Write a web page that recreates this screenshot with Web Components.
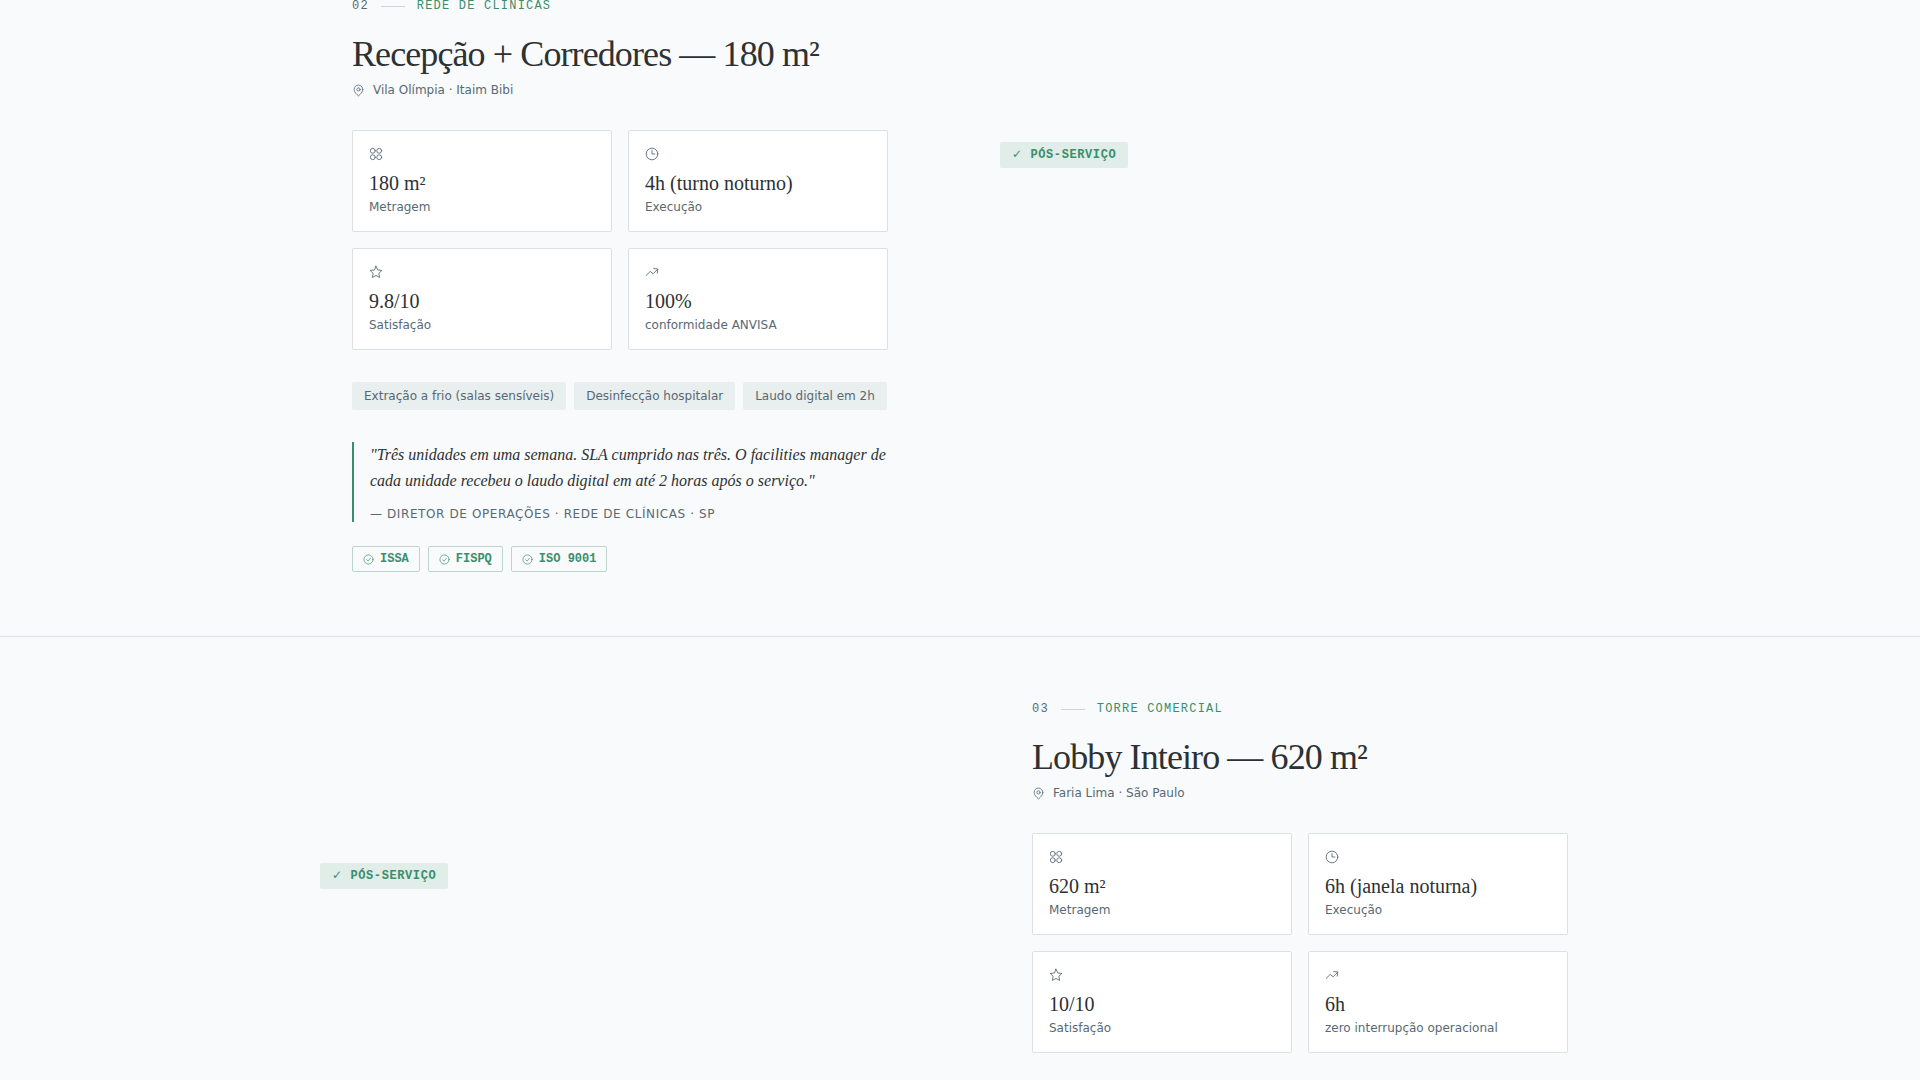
<!DOCTYPE html>
<html lang="pt-BR">
<head>
<meta charset="UTF-8">
<meta name="viewport" content="width=device-width, initial-scale=1">
<title>Cases</title>
<style>
    :root {
        --bg: #f8fafb;
        --ink: #2d3134;
        --muted: #586974;
        --green: #3a8e6c;
        --line: #dee1e3;
        --sans: "DejaVu Sans", sans-serif;
        --serif: "Liberation Serif", serif;
        --mono: "Liberation Mono", monospace;
    }

    body {
        margin: 0;
        background: var(--bg);
        color: var(--ink);
        font: 12px/16px var(--sans);
    }

    main {
        margin-top: -66px;
    }
</style>
</head>
<body>
<main>
    <case-study number="02" category="REDE DE CLÍNICAS" place="Vila Olímpia · Itaim Bibi">
        <span slot="title">Recepção + Corredores — 180 m²</span>
        <stat-card slot="stats" icon="grid" value="180 m²" label="Metragem"></stat-card>
        <stat-card slot="stats" icon="clock" value="4h (turno noturno)" label="Execução"></stat-card>
        <stat-card slot="stats" icon="star" value="9.8/10" label="Satisfação"></stat-card>
        <stat-card slot="stats" icon="trend" value="100%" label="conformidade ANVISA"></stat-card>
        <tag-list>
            <service-tag>Extração a frio (salas sensíveis)</service-tag>
            <service-tag>Desinfecção hospitalar</service-tag>
            <service-tag>Laudo digital em 2h</service-tag>
        </tag-list>
        <client-quote author="— DIRETOR DE OPERAÇÕES · REDE DE CLÍNICAS · SP">"Três unidades em uma semana. SLA cumprido nas três. O facilities manager de cada unidade recebeu o laudo digital em até 2 horas após o serviço."</client-quote>
        <tag-list>
            <cert-badge>ISSA</cert-badge>
            <cert-badge>FISPQ</cert-badge>
            <cert-badge>ISO 9001</cert-badge>
        </tag-list>
    </case-study>

    <case-study reverse number="03" category="TORRE COMERCIAL" place="Faria Lima · São Paulo">
        <span slot="title">Lobby Inteiro — 620 m²</span>
        <stat-card slot="stats" icon="grid" value="620 m²" label="Metragem"></stat-card>
        <stat-card slot="stats" icon="clock" value="6h (janela noturna)" label="Execução"></stat-card>
        <stat-card slot="stats" icon="star" value="10/10" label="Satisfação"></stat-card>
        <stat-card slot="stats" icon="trend" value="6h" label="zero interrupção operacional"></stat-card>
    </case-study>
</main>

<script>
const ICONS = {
    grid: '<circle cx="6.500" cy="6.500" r="4.200"/><circle cx="17.500" cy="6.500" r="4.200"/><circle cx="6.500" cy="17.500" r="4.200"/><circle cx="17.500" cy="17.500" r="4.200"/>',
    clock: '<circle cx="12" cy="12" r="10"/><path d="M12 6v6h5"/>',
    star: '<path d="M12 2l3 6.500 7 .9-5.100 4.900 1.300 7L12 18l-6.200 3.300 1.300-7L2 9.400l7-.9z"/>',
    trend: '<path d="M2 18l7-7 5 4 8-8"/><path d="M15 6l7 1-1 7"/>',
    pin: '<path d="M20 10c0 5-4 8.500-8 12-4-3.500-8-7-8-12a8 8 0 0 1 16 0z"/><circle cx="12" cy="10" r="3"/>',
    check: '<circle cx="12" cy="12" r="10"/><path d="M8 12.500l3 3 5-6"/>'
};

class SvgIcon extends HTMLElement {
    constructor() {
        super();
        this.attachShadow({ mode: 'open' });
    }

    connectedCallback() {
        this.shadowRoot.innerHTML = `
            <style>
                :host {
                    display: block;
                    flex: none;
                    width: 14px;
                    height: 14px;
                }

                svg {
                    display: block;
                    width: 100%;
                    height: 100%;
                    fill: none;
                    stroke: currentColor;
                    stroke-width: 1.5;
                    stroke-linecap: round;
                    stroke-linejoin: round;
                }
            </style>
            <svg viewBox="0 0 24 24" aria-hidden="true">${ICONS[this.getAttribute('name')]}</svg>
        `;
    }
}

class StatCard extends HTMLElement {
    constructor() {
        super();
        this.attachShadow({ mode: 'open' });
    }

    connectedCallback() {
        this.shadowRoot.innerHTML = `
            <style>
                :host {
                    display: block;
                    padding: 16px;
                    background: #fff;
                    border: 1px solid var(--line);
                    border-radius: 2px;
                }

                svg-icon {
                    color: var(--muted);
                    margin-bottom: 8px;
                }

                p {
                    margin: 0;
                }

                .value {
                    margin-bottom: 2px;
                    font: 20px/28px var(--serif);
                }

                .label {
                    color: var(--muted);
                }
            </style>
            <svg-icon name="${this.getAttribute('icon')}"></svg-icon>
            <p class="value">${this.getAttribute('value')}</p>
            <p class="label">${this.getAttribute('label')}</p>
        `;
    }
}

class TagList extends HTMLElement {
    constructor() {
        super();
        this.attachShadow({ mode: 'open' });
    }

    connectedCallback() {
        this.shadowRoot.innerHTML = `
            <style>
                :host {
                    display: flex;
                    flex-wrap: wrap;
                    gap: 8px;
                }
            </style>
            <slot></slot>
        `;
    }
}

class ServiceTag extends HTMLElement {
    constructor() {
        super();
        this.attachShadow({ mode: 'open' });
    }

    connectedCallback() {
        this.shadowRoot.innerHTML = `
            <style>
                :host {
                    display: block;
                    padding: 6px 12px;
                    color: var(--muted);
                    background: #e9eeee;
                    border-radius: 2px;
                }
            </style>
            <slot></slot>
        `;
    }
}

class ClientQuote extends HTMLElement {
    constructor() {
        super();
        this.attachShadow({ mode: 'open' });
    }

    connectedCallback() {
        this.shadowRoot.innerHTML = `
            <style>
                :host {
                    display: block;
                    margin: 32px 0 24px;
                }

                blockquote {
                    margin: 0;
                    padding-left: 16px;
                    border-left: 2px solid var(--green);
                }

                p {
                    margin: 0 0 12px;
                    font: italic 16px/26px var(--serif);
                }

                cite {
                    display: block;
                    color: var(--muted);
                    font-style: normal;
                    letter-spacing: 0.05em;
                }
            </style>
            <blockquote>
                <p><slot></slot></p>
                <cite>${this.getAttribute('author')}</cite>
            </blockquote>
        `;
    }
}

class CertBadge extends HTMLElement {
    constructor() {
        super();
        this.attachShadow({ mode: 'open' });
    }

    connectedCallback() {
        this.shadowRoot.innerHTML = `
            <style>
                :host {
                    display: flex;
                    align-items: center;
                    gap: 6px;
                    padding: 4px 10px;
                    color: var(--green);
                    border: 1px solid #bcd6cc;
                    border-radius: 2px;
                    font: bold 12px/16px var(--mono);
                }

                svg-icon {
                    width: 11px;
                    height: 11px;
                }
            </style>
            <svg-icon name="check"></svg-icon>
            <slot></slot>
        `;
    }
}

class CaseStudy extends HTMLElement {
    constructor() {
        super();
        this.attachShadow({ mode: 'open' });
    }

    connectedCallback() {
        this.shadowRoot.innerHTML = `
            <style>
                :host {
                    display: block;
                    padding: 64px 32px;
                    border-bottom: 1px solid var(--line);
                }

                .row {
                    display: grid;
                    grid-template-columns: 1fr 1fr;
                    align-items: center;
                    gap: 80px;
                    max-width: 1280px;
                    margin: 0 auto;
                }

                .info {
                    padding: 0 32px;
                }

                /* the media column comes first on alternate rows */
                :host([reverse]) .info {
                    order: 2;
                    min-height: 610px;
                }

                .eyebrow {
                    display: flex;
                    align-items: center;
                    gap: 12px;
                    margin-bottom: 20px;
                    font: 12px/16px var(--mono);
                    letter-spacing: 0.1em;
                    color: var(--muted);
                }

                .eyebrow i {
                    width: 24px;
                    height: 1px;
                    background: #cfd4d6;
                }

                .eyebrow b {
                    font-weight: normal;
                    color: var(--green);
                }

                h2 {
                    margin: 0 0 8px;
                    font: 36px/40px var(--serif);
                    letter-spacing: -0.025em;
                }

                .place {
                    display: flex;
                    align-items: center;
                    gap: 8px;
                    margin: 0 0 32px;
                    color: var(--muted);
                }

                .place svg-icon {
                    width: 13px;
                    height: 13px;
                }

                .stats {
                    display: grid;
                    grid-template-columns: 1fr 1fr;
                    gap: 16px;
                    margin-bottom: 32px;
                }

                .media {
                    display: flex;
                    align-items: flex-start;
                    min-height: 286px;
                }

                .badge {
                    padding: 4px 12px;
                    color: var(--green);
                    background: #e0ede8;
                    border-radius: 2px;
                    font: bold 12px/18px var(--mono);
                    letter-spacing: 0.05em;
                }

                .tick {
                    font-family: var(--sans);
                    line-height: 1;
                }
            </style>
            <section class="row">
                <div class="info">
                    <div class="eyebrow">
                        <span>${this.getAttribute('number')}</span>
                        <i></i>
                        <b>${this.getAttribute('category')}</b>
                    </div>
                    <h2><slot name="title"></slot></h2>
                    <p class="place"><svg-icon name="pin"></svg-icon>${this.getAttribute('place')}</p>
                    <div class="stats"><slot name="stats"></slot></div>
                    <slot></slot>
                </div>
                <div class="media">
                    <span class="badge"><span class="tick">✓</span> PÓS-SERVIÇO</span>
                </div>
            </section>
        `;
    }
}

customElements.define('svg-icon', SvgIcon);
customElements.define('stat-card', StatCard);
customElements.define('tag-list', TagList);
customElements.define('service-tag', ServiceTag);
customElements.define('client-quote', ClientQuote);
customElements.define('cert-badge', CertBadge);
customElements.define('case-study', CaseStudy);
</script>
</body>
</html>
